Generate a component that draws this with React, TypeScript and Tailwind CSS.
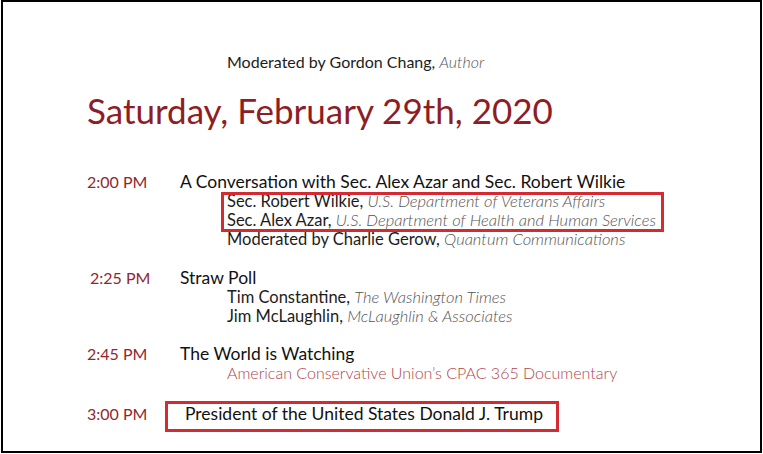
import React from "react";

type Sub = { name: string; org: string; red?: boolean };

type Item = {
  time: string;
  title: string;
  subs: Sub[];
  rowClass: string;
  subClass: string;
  timeIndent?: boolean;
  highlight?: boolean;
};

const ITEMS: Item[] = [
  {
    time: "2:00 PM",
    title: "A Conversation with Sec. Alex Azar and Sec. Robert Wilkie",
    subs: [
      { name: "Sec. Robert Wilkie,", org: "U.S. Department of Veterans Affairs" },
      { name: "Sec. Alex Azar,", org: "U.S. Department of Health and Human Services" },
      { name: "Moderated by Charlie Gerow,", org: "Quantum Communications" },
    ],
    rowClass: "mt-[43px]",
    subClass: "pt-[1px]",
    highlight: true,
  },
  {
    time: "2:25 PM",
    title: "Straw Poll",
    subs: [
      { name: "Tim Constantine,", org: "The Washington Times" },
      { name: "Jim McLaughlin,", org: "McLaughlin & Associates" },
    ],
    rowClass: "mt-[20px]",
    subClass: "pt-[1px]",
    timeIndent: true,
  },
  {
    time: "2:45 PM",
    title: "The World is Watching",
    subs: [{ name: "", org: "American Conservative Union’s CPAC 365 Documentary", red: true }],
    rowClass: "mt-[19px]",
    subClass: "pt-0",
  },
];

const SubLine = ({ name, org, red }: Sub) =>
  red ? (
    <div className="leading-[19px] text-[16px] text-[#b0454b] font-light whitespace-nowrap">{org}</div>
  ) : (
    <div className="leading-[19px] text-[16.5px] whitespace-nowrap">
      <span className="text-[#1c1c1c]">{name}</span>{" "}
      <span className="italic font-light text-[#555]">{org}</span>
    </div>
  );

const Row = ({ item }: { item: Item }) => (
  <div className={`grid grid-cols-[93px_1fr] ${item.rowClass}`}>
    <div
      className={`text-[16px] leading-[18px] text-[#93272c] whitespace-nowrap ${item.timeIndent ? "pl-[3px]" : ""}`}
    >
      {item.time}
    </div>
    <div>
      <div className="text-[17.5px] leading-[18px] text-[#111] whitespace-nowrap">{item.title}</div>
      <div className={`relative pl-[47px] ${item.subClass}`}>
        {item.subs.map((s, i) => (
          <SubLine key={i} {...s} />
        ))}
        {/* highlight overlay */}
        {item.highlight && (
          <div className="absolute left-[41px] top-[1px] w-[443px] h-[40px] border-[3px] border-[#d42a31]" />
        )}
      </div>
    </div>
  </div>
);

export default function App() {
  return (
    <div className="w-[763px] h-[454px] bg-white" style={{ fontFamily: "Lato, 'Noto Sans', sans-serif" }}>
      <div className="ml-[1px] w-[761px] h-[453px] border-2 border-black pl-[84px] pt-[50px]">
        <div className="pl-[140px] text-[16px] leading-[20px] whitespace-nowrap">
          <span className="text-[#1c1c1c]">Moderated by Gordon Chang,</span>{" "}
          <span className="italic font-light text-[#555]">Author</span>
        </div>
        <h1 className="mt-[18px] text-[35px] leading-[40px] text-[#8e1d24] font-normal whitespace-nowrap">
          Saturday, February 29th, 2020
        </h1>
        {ITEMS.map((it) => (
          <Row key={it.time} item={it} />
        ))}
        <div className="grid grid-cols-[93px_1fr] mt-[23px]">
          <div className="text-[16px] leading-[18px] text-[#93272c]">3:00 PM</div>
          <div className="relative">
            <div className="pl-[5px] text-[17.5px] leading-[18px] text-[#111] whitespace-nowrap">
              President of the United States Donald J. Trump
            </div>
            <div className="absolute -left-[15px] -top-[4px] w-[394px] h-[31px] border-[3px] border-[#d42a31]" />
          </div>
        </div>
      </div>
    </div>
  );
}
